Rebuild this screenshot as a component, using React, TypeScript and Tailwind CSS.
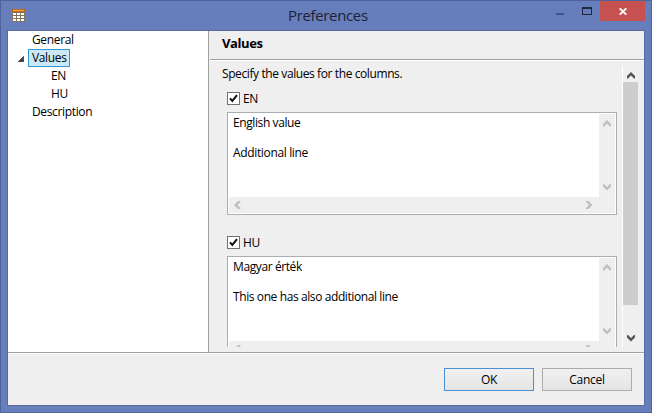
import React from 'react';
import clsx from 'clsx';

type Direction = 'up' | 'down' | 'left' | 'right';

const chevrons: Record<Direction, string> = {
  up: 'M0 4 4 0 8 4V6.5H7L4 3.4 1 6.5H0Z',
  down: 'M0 2.5 4 6.5 8 2.5V0H7L4 3.1 1 0H0Z',
  left: 'M4 0 0 4 4 8H6.5V7L3.4 4 6.5 1V0Z',
  right: 'M2.5 0 6.5 4 2.5 8H0V7L3.1 4 0 1V0Z',
};

function Chevron({ dir, className }: { dir: Direction; className?: string }) {
  const vertical = dir === 'up' || dir === 'down';
  return (
    <svg
      className={clsx('block shrink-0', className)}
      width={vertical ? 8 : 7}
      height={vertical ? 7 : 8}
      fill="currentColor"
    >
      <path d={chevrons[dir]} />
    </svg>
  );
}

function CheckRow({ label }: { label: string }) {
  return (
    <div className="flex h-[13px] items-center">
      <svg width="13" height="13" className="block shrink-0">
        <rect x="0.5" y="0.5" width="12" height="12" fill="#fff" stroke="#707070" />
        <path d="M3 6.4 5.3 9 10 3.2" fill="none" stroke="#111" strokeWidth="2" />
      </svg>
      <span className="ml-[3px] tracking-[-0.3px]">{label}</span>
    </div>
  );
}

function TextBox({ first, second, secondClass }: { first: string; second: string; secondClass: string }) {
  return (
    <div className="flex h-[103px] w-[390px] shrink-0 flex-col border border-[#abadb3] bg-white p-px">
      <div className="flex h-[83px]">
        <div className="flex-1 pl-1 pt-px leading-[15px]">
          <div className="tracking-[-0.4px]">{first}</div>
          <div className="h-[15px]" />
          <div className={secondClass}>{second}</div>
        </div>
        <div className="flex w-4 flex-col items-center justify-between bg-[#efefef] pb-[6px] pt-[6px] text-[#bfbfbf]">
          <Chevron dir="up" />
          <Chevron dir="down" />
        </div>
      </div>
      <div className="flex h-4 items-center justify-between bg-[#efefef] pl-[5px] pr-[22px] text-[#bfbfbf]">
        <Chevron dir="left" />
        <Chevron dir="right" />
      </div>
    </div>
  );
}

function TableIcon() {
  return (
    <svg width="13" height="13" className="block" shapeRendering="crispEdges">
      <rect width="13" height="13" fill="#80735f" />
      <rect width="13" height="3" fill="#c06a1c" />
      <rect x="1" y="1" width="11" height="1" fill="#f5a13c" />
      {[1, 5, 9].map((x) =>
        [3, 6, 9].map((y) => (
          <rect key={`${x}-${y}`} x={x} y={y + (y === 3 ? 1 : 1)} width="3" height="2" fill="#fffef8" />
        )),
      )}
    </svg>
  );
}

function TitleBar() {
  return (
    <div className="flex h-[29px] shrink-0 items-start">
      <div className="ml-[11px] mt-2">
        <TableIcon />
      </div>
      <div className="ml-[263px] mt-[4px] w-[268px] whitespace-nowrap text-[15px] leading-5 tracking-[-0.35px] text-[#1c2233]">
        Preferences
      </div>
      <svg width="44" height="20" className="block shrink-0" shapeRendering="crispEdges">
        <rect x="0" y="12" width="8" height="2" fill="#43527f" />
        <path d="M26 6h10v8h-10zM27 8v5h8V8z" fill="#20283e" fillRule="evenodd" />
      </svg>
      <div className="flex h-5 w-[45px] items-center justify-center bg-[#c75050]">
        <svg width="8" height="7" className="block">
          <path d="M0.7 0.3 7.3 6.7M7.3 0.3 0.7 6.7" stroke="#fff" strokeWidth="1.8" />
        </svg>
      </div>
    </div>
  );
}

function Tree() {
  return (
    <div className="flex w-[201px] shrink-0 flex-col border-r border-[#a0a0a0] bg-white leading-[18px]">
      <div className="h-[18px] pl-6 tracking-[-0.35px]">General</div>
      <div className="flex h-[18px] items-center">
        <svg width="6" height="6" className="ml-[10px] mt-px block shrink-0">
          <path d="M0.3 5.7 5.7 0.3V5.7Z" fill="#404040" stroke="#262626" strokeWidth="0.6" />
        </svg>
        <div className="ml-1 h-[18px] w-[42px] border border-[#3399cc] bg-[#cbe8f6] pl-[3px] leading-4 tracking-[-0.35px]">
          Values
        </div>
      </div>
      <div className="h-[18px] pl-[43px] tracking-[-0.3px]">EN</div>
      <div className="h-[18px] pl-[43px] tracking-[-0.3px]">HU</div>
      <div className="h-[18px] pl-6 tracking-[-0.35px]">Description</div>
    </div>
  );
}

function Page() {
  return (
    <div className="flex min-w-0 flex-1 flex-col pl-px">
      <div className="h-[29px] shrink-0 border-b border-[#a0a0a0] pl-3 pt-1 text-[13px] font-bold leading-4 tracking-[-0.4px]">
        Values
      </div>
      <div className="h-px shrink-0 bg-white" />
      <div className="mt-[5px] flex h-[281px] overflow-hidden">
        <div className="flex w-[412px] shrink-0 flex-col pl-3">
          <div className="h-4 shrink-0 leading-4 tracking-[-0.4px]">Specify the values for the columns.</div>
          <div className="ml-[5px] mt-[10px] flex flex-col">
            <CheckRow label="EN" />
            <div className="h-[7px]" />
            <TextBox first="English value" second="Additional line" secondClass="tracking-[-0.35px]" />
            <div className="h-[21px]" />
            <CheckRow label="HU" />
            <div className="h-[7px]" />
            <TextBox first="Magyar érték" second="This one has also additional line" secondClass="tracking-[-0.4px]" />
          </div>
        </div>
        <div className="flex w-4 flex-col items-center border-l border-white pb-[5px] pt-[6px] text-[#555]">
          <Chevron dir="up" />
          <div className="mt-[3px] h-[223px] w-[15px] bg-[#cdcdcd]" />
          <Chevron dir="down" className="mt-auto" />
        </div>
      </div>
    </div>
  );
}

export default function App() {
  return (
    <div className="flex h-[413px] w-[652px] flex-col overflow-hidden whitespace-nowrap border border-[#50649c] bg-[#677ebc] font-['Open_Sans','Noto_Sans',sans-serif] text-[12px] text-black">
      <TitleBar />
      <div className="ml-[6px] flex h-[376px] w-[638px] shrink-0 flex-col border border-[#58699c] bg-[#efefef]">
        <div className="flex h-[321px] shrink-0">
          <Tree />
          <Page />
        </div>
        <div className="h-[2px] shrink-0 border-b border-t border-b-white border-t-[#a0a0a0]" />
        <div className="flex justify-end gap-2 pr-3 pt-[14px]">
          <button className="h-[23px] w-[90px] border border-[#4a90d9] bg-linear-to-b from-[#f0f0f0] to-[#e5e5e5] leading-[21px] tracking-[-0.3px]">
            OK
          </button>
          <button className="h-[23px] w-[90px] border border-[#acacac] bg-linear-to-b from-[#f0f0f0] to-[#e5e5e5] leading-[21px] tracking-[-0.3px]">
            Cancel
          </button>
        </div>
      </div>
    </div>
  );
}
